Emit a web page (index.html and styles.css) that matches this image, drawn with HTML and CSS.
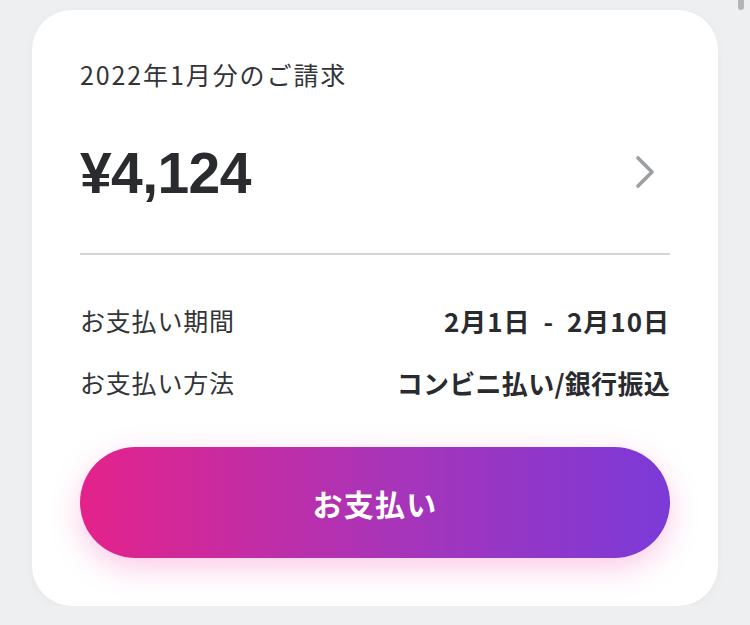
FILE: index.html
```html
<!DOCTYPE html>
<html lang="ja">
<head>
    <meta charset="UTF-8">
    <meta name="viewport" content="width=device-width, initial-scale=1.0">
    <title>ご請求</title>
    <link rel="stylesheet" href="styles.css">
</head>
<body>
    <div class="scroll-thumb"></div>
    <div class="card">
        <div class="bill-title">2022年1月分のご請求</div>
        <div class="amount-row">
            <span class="amount">¥4,124</span>
            <svg class="chevron" width="20" height="34" viewBox="0 0 20 34">
                <path d="M3 3 L17 17 L3 31" fill="none" stroke="#9b9fa4" stroke-width="3.6" stroke-linecap="round" stroke-linejoin="round"/>
            </svg>
        </div>
        <hr class="divider">
        <div class="info-row">
            <span class="info-label">お支払い期間</span>
            <span class="info-value period">2月1日 - 2月10日</span>
        </div>
        <div class="info-row second">
            <span class="info-label">お支払い方法</span>
            <span class="info-value">コンビニ払い/銀行振込</span>
        </div>
        <button class="pay-button">お支払い</button>
    </div>
</body>
</html>
```

FILE: styles.css
```css
body {
    margin: 0;
    padding: 10px 32px 0;
    background-color: #eeeff1;
    font-family: "Noto Sans CJK JP", "Noto Sans", sans-serif;
    color: #333438;
}
.scroll-thumb {
    position: absolute;
    top: -4px;
    left: 738px;
    width: 6px;
    height: 14px;
    border-radius: 3px;
    background-color: #b4b5b8;
}
.card {
    background-color: #fff;
    border-radius: 40px;
    padding: 46px 48px 48px;
    box-shadow: 0 2px 10px rgba(0, 0, 0, 0.04);
}
.bill-title {
    font-size: 25px;
    line-height: 36px;
    letter-spacing: 1.9px;
}
.amount-row {
    display: flex;
    justify-content: space-between;
    align-items: center;
    margin-top: 49px;
    height: 64px;
    padding-right: 15px;
}
.amount {
    font-family: "Liberation Sans", Arial, sans-serif;
    font-weight: bold;
    font-size: 57px;
    letter-spacing: -0.6px;
    color: #2a2b2f;
}
.chevron {
    display: block;
    margin-top: -2px;
}
.divider {
    border: none;
    border-top: 2px solid #d4d5d8;
    margin: 48px 0 0;
}
.info-row {
    display: flex;
    justify-content: space-between;
    align-items: center;
    height: 36px;
    margin-top: 47px;
    font-size: 25px;
}
.info-row.second {
    margin-top: 26px;
}
.info-label {
    letter-spacing: 0.8px;
}
.info-value {
    font-weight: bold;
    font-size: 26px;
    letter-spacing: 0.3px;
    color: #2a2b2f;
}
.info-value.period {
    letter-spacing: 1px;
    word-spacing: 6px;
}
.pay-button {
    display: block;
    width: 100%;
    height: 111px;
    margin-top: 47px;
    border: none;
    border-radius: 56px;
    background: linear-gradient(90deg, #e4228a, #a934b8 52%, #7b3ad8);
    box-shadow: 0 10px 30px rgba(242, 70, 170, 0.28);
    color: #fff;
    font-family: "Noto Sans CJK JP", "Noto Sans", sans-serif;
    font-weight: bold;
    font-size: 30px;
    letter-spacing: 1.2px;
    cursor: pointer;
}
```
